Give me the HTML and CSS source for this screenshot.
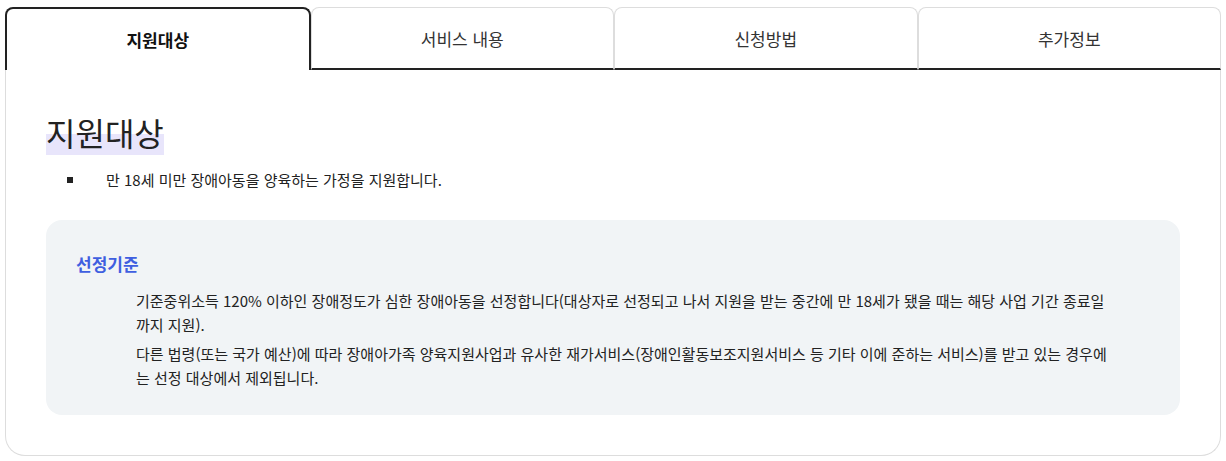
FILE: index.html
```html
<!DOCTYPE html>
<html lang="ko">
<head>
    <meta charset="UTF-8">
    <meta name="viewport" content="width=device-width, initial-scale=1.0">
    <title>지원대상</title>
    <link rel="stylesheet" href="styles.css">
</head>
<body>
<div class="wrap">
    <div class="tabs">
        <a href="#" class="tab active">지원대상</a>
        <a href="#" class="tab">서비스 내용</a>
        <a href="#" class="tab">신청방법</a>
        <a href="#" class="tab">추가정보</a>
    </div>
    <div class="panel">
        <h2 class="title"><span>지원대상</span></h2>
        <ul class="bullets">
            <li>만 18세 미만 장애아동을 양육하는 가정을 지원합니다.</li>
        </ul>
        <div class="info-box">
            <h3>선정기준</h3>
            <div class="info-text">
                <p>기준중위소득 120% 이하인 장애정도가 심한 장애아동을 선정합니다(대상자로 선정되고 나서 지원을 받는 중간에 만 18세가 됐을 때는 해당 사업 기간 종료일까지 지원).</p>
                <p>다른 법령(또는 국가 예산)에 따라 장애아가족 양육지원사업과 유사한 재가서비스(장애인활동보조지원서비스 등 기타 이에 준하는 서비스)를 받고 있는 경우에는 선정 대상에서 제외됩니다.</p>
            </div>
        </div>
    </div>
</div>
</body>
</html>
```

FILE: styles.css
```css
body {
    margin: 0;
    padding: 0;
    background-color: #fff;
    font-family: "Noto Sans CJK KR", "Noto Sans", sans-serif;
    color: #222;
}
.wrap {
    width: 1216px;
    margin: 7px 0 0 5px;
}
.tabs {
    display: flex;
    height: 63px;
}
.tab {
    flex: 1;
    display: flex;
    justify-content: center;
    align-items: center;
    font-size: 17px;
    color: #333;
    text-decoration: none;
    border: 1px solid #ddd;
    border-bottom: 2px solid #222;
    border-radius: 8px 8px 0 0;
    box-sizing: border-box;
}
.tab.active {
    border: 2px solid #222;
    border-bottom: none;
    font-weight: bold;
    color: #111;
}
.panel {
    border: 1px solid #ddd;
    border-top: none;
    border-radius: 0 0 20px 20px;
    padding: 42px 40px 40px 40px;
    height: 303px;
}
.title {
    margin: 0;
    font-size: 32px;
    font-weight: normal;
    line-height: 40px;
    color: #222;
}
.title span {
    background: linear-gradient(to bottom, transparent 55%, #e8e5fb 55%);
}
.bullets {
    list-style: none;
    margin: 16px 0 0 0;
    padding: 0 0 0 21px;
}
.bullets li {
    display: flex;
    align-items: center;
    gap: 33px;
    font-size: 15px;
    line-height: 24px;
}
.bullets li::before {
    content: "";
    width: 6px;
    height: 6px;
    background-color: #222;
    flex-shrink: 0;
}
.info-box {
    margin-top: 28px;
    background-color: #f1f4f6;
    border-radius: 16px;
    padding: 32px 30px 20px 30px;
}
.info-box h3 {
    margin: 0;
    font-size: 17px;
    line-height: 24px;
    color: #3f5fe0;
    font-weight: bold;
}
.info-text {
    margin-top: 13px;
    padding: 0 40px 0 60px;
}
.info-text p {
    margin: 0 0 5px 0;
    font-size: 15px;
    line-height: 24px;
}
```
